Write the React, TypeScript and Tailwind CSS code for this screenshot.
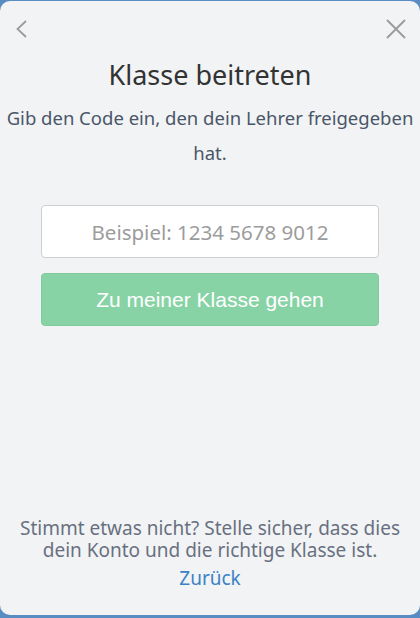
import React from 'react';

export default function App() {
  return (
    <div className="w-[420px] h-[618px] bg-[#5a8cc4] pt-px pb-[3px] overflow-hidden" style={{ fontFamily: '"Noto Sans", sans-serif' }}>
      <div className="h-full bg-[#f2f3f5] rounded-t-[10px] rounded-b-[10px] flex flex-col">
        <div className="flex items-center justify-between px-3 pt-3 h-[44px]">
          <button aria-label="back" className="text-[#9a9a9a]">
            <svg width="20" height="24" viewBox="0 0 20 24" fill="none" stroke="currentColor" strokeWidth="1.8">
              <path d="M14 4 L5.5 12 L14 20" />
            </svg>
          </button>
          <button aria-label="close" className="text-[#9a9a9a]">
            <svg width="24" height="24" viewBox="0 0 24 24" fill="none" stroke="currentColor" strokeWidth="1.8">
              <path d="M3 3 L21 21 M21 3 L3 21" />
            </svg>
          </button>
        </div>
        <h1 className="text-center text-[27px] leading-[34px] text-[#333] mt-[13px]">Klasse beitreten</h1>
        <p className="text-center text-[18.5px] leading-[35px] text-[#4a5668] mt-[8px] px-1">
          Gib den Code ein, den dein Lehrer freigegeben hat.
        </p>
        <div className="px-[41px] mt-[35px] flex flex-col gap-[15px]">
          <input
            placeholder="Beispiel: 1234 5678 9012"
            className="w-full h-[53px] bg-white border border-[#cfcfcf] rounded-[4px] text-center text-[20.5px] text-[#333] placeholder:text-[#9c9c9c] outline-none"
            style={{ fontFamily: '"Noto Sans", sans-serif' }}
          />
          <button
            className="w-full h-[53px] bg-[#88d3a6] rounded-[4px] text-white text-[21px] border border-[#7fcb9e]"
            style={{ fontFamily: '"Liberation Sans", Arial, sans-serif' }}
          >
            Zu meiner Klasse gehen
          </button>
        </div>
        <div className="flex-1" />
        <div className="text-center text-[19px] leading-[22px] text-[#687080] pb-[26px] px-2">
          <p>Stimmt etwas nicht? Stelle sicher, dass dies dein Konto und die richtige Klasse ist.</p>
          <a className="block mt-[6px] text-[#3b82c4]" href="#">Zurück</a>
        </div>
      </div>
    </div>
  );
}
